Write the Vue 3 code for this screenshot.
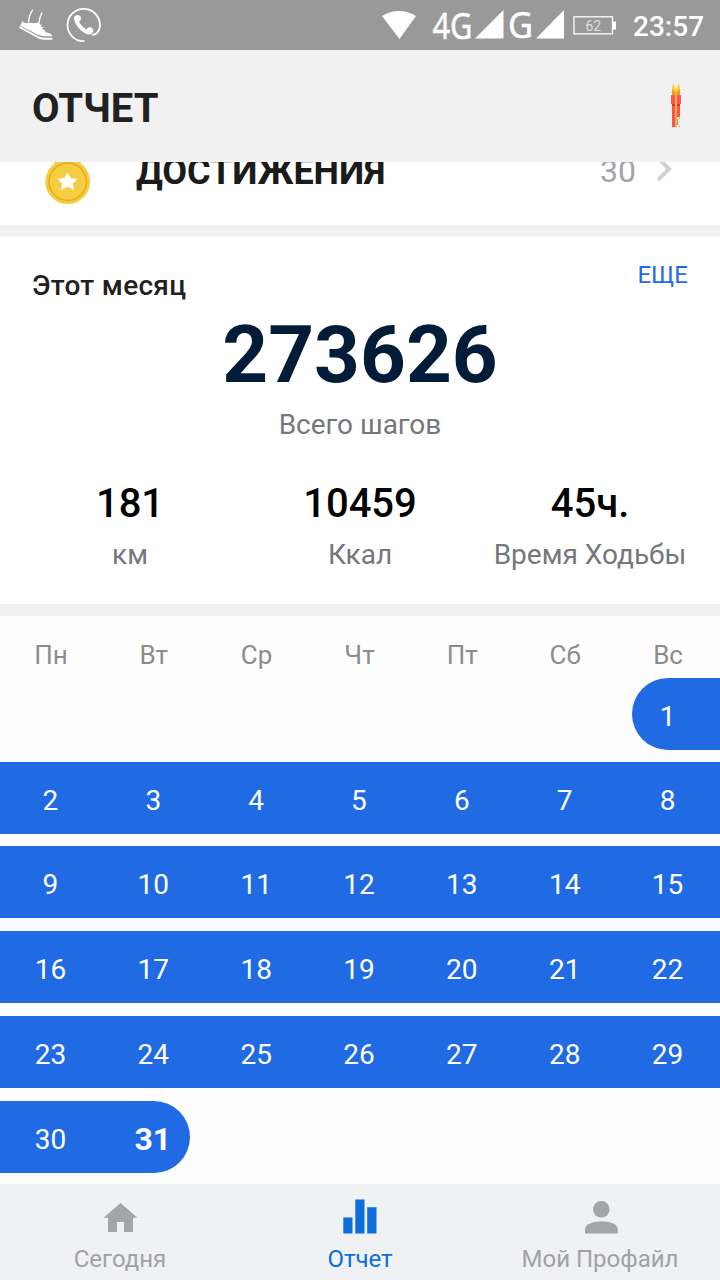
<template>
  <div class="screen">
    <div class="status">
      <svg class="sneaker" width="36" height="32" viewBox="0 0 36 32">
        <path d="M14.700 0.800 Q11 6 10.500 13 M24 3.500 Q21.500 8 21 14" fill="none" stroke="#fff" stroke-width="1.300" />
        <path d="M4.800 12.200 Q7.500 15.500 11 13.500 Q15 15 21 13.500 L23.500 18 Q25.500 22.500 30 24 Q34 25 34.400 27.300 H26 Q22 27 18 24.700 L2 16.800 Z" fill="#fff" />
        <path d="M1.300 18 L17 26.500 Q21.500 29.800 26 29.800 H34.300" fill="none" stroke="#fff" stroke-width="1.900" />
        <path d="M20.500 17.500 L23.800 15.800 M22 20 L25.200 18.300 M24 22.500 L26.800 20.800" stroke="#fff" stroke-width="1.100" />
      </svg>
      <svg class="call" width="36" height="36" viewBox="0 0 36 36">
        <path d="M18.500 34.200 A16.200 16.200 0 1 1 33.600 21 Q32 27.500 26 27.800" fill="none" stroke="#fff" stroke-width="1.800" />
        <path d="M8 12 Q7.500 8.500 11 8 Q14.500 7.500 15 11 Q15.200 13 13 14.500 Q15 19 20.500 22.500 Q22 19.500 25 20.500 Q28.500 22 26.800 25.300 Q24.500 29 20 26.800 Q10 21.500 8 12 Z" fill="#fff" />
      </svg>
      <svg class="wifi" width="34" height="28" viewBox="0 0 34 28">
        <path d="M0 5 Q17 -5 34 5 L17.500 28 Z" fill="#fff" />
      </svg>
      <svg class="network" width="132" height="50" viewBox="0 0 132 50">
        <g fill="#fff" stroke="#fff">
          <text x="0.500" y="38.500" stroke-width="0.500" textLength="40" lengthAdjust="spacingAndGlyphs">4G</text>
          <path d="M43 38.500 L71.500 10 V38.500 Z" stroke="none" />
          <text x="76" y="38" stroke-width="0.500" textLength="25" lengthAdjust="spacingAndGlyphs">G</text>
          <path d="M104 38.500 L132 10 V38.500 Z" stroke="none" />
        </g>
      </svg>
      <svg class="battery" width="43" height="19" viewBox="0 0 43 19">
        <rect x="1" y="0.800" width="38.500" height="17" fill="none" stroke="#fff" stroke-width="1.300" />
        <rect x="39.500" y="5.500" width="3.500" height="8" fill="#fff" />
        <text x="20.300" y="14.500" text-anchor="middle" fill="#dedede">62</text>
      </svg>
      <span class="clock">23:57</span>
    </div>

    <header class="header">
      <h1>ОТЧЕТ</h1>
      <svg width="12" height="46" viewBox="0 0 12 46">
        <path d="M1 13 V5 L2.500 0 L4 5 L5 7 L6 5 L7.500 0 L9 5 V13 Z" fill="#ffd02f" />
        <path d="M1 13 V6 L4 9 V13 M9 13 V6 L6 9 V13" fill="#f39a24" />
        <path d="M1 12 H9 V44 H1 Z" fill="#ff5254" />
        <path d="M0 12 H10 V21 H0 Z" fill="#ff5254" />
        <path d="M1 21 H9 V23 H1 Z" fill="#d92f3b" />
        <path d="M4 8 H6 V44 H4 Z" fill="#fbb629" />
        <path d="M6 34 H9 V44 H6 Z" fill="#e6e6e6" />
        <path d="M6 36 H7 V42 H6 Z M8 35 H9 V36 H8 Z M8 43 H9 V44 H8 Z" fill="#9c9c96" />
      </svg>
    </header>

    <section class="achievements">
      <div class="achievements-row">
        <svg class="medal" width="46" height="62" viewBox="0 0 46 62">
          <path d="M9 0 H36 V19 H9 Z" fill="#f5cb3c" />
          <circle cx="22.700" cy="37.700" r="22.400" fill="#f5cd41" />
          <circle cx="22.700" cy="37.700" r="18.700" fill="none" stroke="#e5a91c" stroke-width="1.500" />
          <path d="M22.500 29 L25.400 34.300 L32.200 35.300 L27.500 39.600 L28.800 45.600 L22.500 42.600 L16.200 45.600 L17.500 39.600 L12.800 35.300 L19.600 34.300 Z" fill="#fff" stroke="#fff" stroke-width="0.600" stroke-linejoin="round" />
        </svg>
        <h2>ДОСТИЖЕНИЯ</h2>
        <span class="count">30</span>
        <svg class="chevron" width="16" height="26" viewBox="0 0 16 26">
          <path d="M2 2 L13 13 L2 24" fill="none" stroke="#d0d1d3" stroke-width="4" />
        </svg>
      </div>
    </section>

    <section class="month">
      <div class="month-head">
        <h3>Этот месяц</h3>
        <a class="more">ЕЩЕ</a>
      </div>
      <div class="total">273626</div>
      <div class="total-label">Всего шагов</div>
      <div class="stats">
        <div v-for="stat in stats" :key="stat.label" class="stat">
          <div class="stat-value">{{ stat.value }}</div>
          <div class="stat-label">{{ stat.label }}</div>
        </div>
      </div>
    </section>

    <section class="calendar">
      <div class="week weekdays">
        <span v-for="name in weekdays" :key="name">{{ name }}</span>
      </div>
      <div v-for="(week, i) in weeks" :key="i" class="week days">
        <div
          v-for="(day, j) in week"
          :key="j"
          class="day"
          :class="{ active: day, first: day === 1, today: day === 31 }"
        >
          {{ day }}
        </div>
      </div>
    </section>

    <nav class="tabs">
      <a class="tab">
        <svg width="36" height="36" viewBox="0 0 36 36">
          <path d="M18.500 3 L35.500 17.700 H31 V32 H22 V22 H15 V32 H6 V17.700 H1.500 Z" fill="#a4a5a9" />
        </svg>
        <span>Сегодня</span>
      </a>
      <a class="tab current">
        <svg width="36" height="36" viewBox="0 0 36 36">
          <path d="M1.300 17.500 H10.500 V33.500 H1.300 Z M13.300 -0.500 H22.500 V33.500 H13.300 Z M25.200 7.300 H34.500 V33.500 H25.200 Z" fill="#0d6ddb" />
        </svg>
        <span>Отчет</span>
      </a>
      <a class="tab">
        <svg width="36" height="36" viewBox="0 0 36 36">
          <circle cx="19.300" cy="9.300" r="8.300" fill="#a4a5a9" />
          <path d="M3 33.500 V29 C3 24 12 21.300 19.300 21.300 S35.800 24 35.800 29 V33.500 Z" fill="#a4a5a9" />
        </svg>
        <span>Мой Профайл</span>
      </a>
    </nav>
  </div>
</template>

<script setup>
const stats = [
  { value: '181', label: 'км' },
  { value: '10459', label: 'Ккал' },
  { value: '45ч.', label: 'Время Ходьбы' }
]

const weekdays = ['Пн', 'Вт', 'Ср', 'Чт', 'Пт', 'Сб', 'Вс']

// the month starts on a Sunday
const offset = 6
const daysInMonth = 31

const weeks = []
for (let start = 1 - offset; start <= daysInMonth; start += 7) {
  weeks.push(
    Array.from({ length: 7 }, (_, i) => {
      const day = start + i
      return day >= 1 && day <= daysInMonth ? day : null
    })
  )
}
</script>

<style>
body {
  margin: 0;
  background: #f1f1f1;
}
</style>

<style scoped>
.screen {
  width: 720px;
  height: 1280px;
  display: flex;
  flex-direction: column;
  overflow: hidden;
  background: #f1f1f1;
  font-family: Roboto, 'Noto Sans', sans-serif;
}

h1,
h2,
h3 {
  margin: 0;
}

svg {
  display: block;
  flex-shrink: 0;
}

.status {
  display: flex;
  align-items: center;
  height: 50px;
  flex-shrink: 0;
  box-sizing: border-box;
  padding-left: 18px;
  background: #999;
  color: #fff;
}

.call {
  margin-left: 12px;
}

.wifi {
  margin-left: 280px;
}

.network {
  margin-left: 16px;
  font-family: 'Noto Sans', sans-serif;
  font-size: 36px;
}

.battery {
  margin-left: 9px;
  font-size: 14px;
}

.clock {
  margin-left: 17px;
  padding-top: 3px;
  font-size: 28px;
  font-weight: 500;
}

.header {
  display: flex;
  align-items: center;
  justify-content: space-between;
  height: 112px;
  flex-shrink: 0;
  box-sizing: border-box;
  padding: 0 37px 0 32px;
  background: #f1f1f1;
}

.header h1 {
  padding-top: 6px;
  color: #212121;
  font-size: 40px;
  line-height: 48px;
  font-weight: 700;
}

/* scrolled partly under the header */
.achievements {
  display: flex;
  align-items: flex-end;
  height: 63px;
  flex-shrink: 0;
  overflow: hidden;
  background: #fff;
}

.achievements-row {
  display: flex;
  align-items: center;
  width: 100%;
  height: 108px;
  box-sizing: border-box;
  padding: 0 48px 0 45px;
}

.medal {
  margin-top: 7px;
}

.achievements h2 {
  flex: 1;
  margin-left: 45px;
  padding-top: 2px;
  color: #1b1b1b;
  font-size: 36px;
  line-height: 44px;
  font-weight: 700;
  letter-spacing: -0.1px;
}

.count {
  color: #a3a4a8;
  font-size: 32px;
}

.chevron {
  margin: 0 0 4px 20px;
}

.month {
  height: 367px;
  flex-shrink: 0;
  margin: 12px 0;
  background: #fff;
  text-align: center;
}

.month-head {
  display: flex;
  justify-content: space-between;
  height: 72px;
  box-sizing: border-box;
  padding: 22px 32px 0;
}

.month-head h3 {
  padding-top: 10px;
  color: #212121;
  font-size: 28px;
  line-height: 34px;
  font-weight: 500;
  letter-spacing: 0.3px;
}

.more {
  color: #206be3;
  font-size: 24px;
  line-height: 32px;
}

.total {
  color: #001c38;
  font-size: 80px;
  line-height: 92px;
  font-weight: 700;
}

.total-label {
  padding-top: 7px;
  color: #74777c;
  font-size: 28px;
  line-height: 34px;
}

.stats {
  display: grid;
  grid-template-columns: repeat(3, 1fr);
  padding: 38px 15px 0;
}

.stat-value {
  color: #000;
  font-size: 40px;
  line-height: 48px;
  font-weight: 500;
}

.stat-label {
  padding-top: 10px;
  color: #74777c;
  font-size: 28px;
  line-height: 34px;
  white-space: nowrap;
}

.calendar {
  flex: 1;
  background: #fdfdfd;
}

.week {
  display: grid;
  grid-template-columns: repeat(7, 1fr);
  text-align: center;
}

.weekdays {
  height: 62px;
  box-sizing: border-box;
  padding-top: 23px;
  color: #8c8c8c;
  font-size: 26px;
  line-height: 32px;
}

.weekdays span {
  padding-right: 1px;
}

.days {
  height: 72px;
  margin-bottom: 13px;
}

.days:nth-child(2),
.days:nth-child(3) {
  margin-bottom: 12px;
}

.days:last-child {
  margin-bottom: 0;
}

.day {
  box-sizing: border-box;
  padding: 5px 2px 0 0;
  color: #fff;
  font-size: 28px;
  line-height: 67px;
}

.day.active {
  background: #206be3;
}

.day.first {
  margin-left: 15px;
  padding-right: 17px;
  border-radius: 36px 0 0 36px;
}

.day.today {
  margin-right: 16px;
  padding-right: 0;
  padding-left: 13px;
  border-radius: 0 36px 36px 0;
  font-size: 32px;
  font-weight: 700;
}

.tabs {
  display: grid;
  grid-template-columns: repeat(3, 1fr);
  height: 96px;
  flex-shrink: 0;
  background: #f0f1f3;
}

.tab {
  display: flex;
  flex-direction: column;
  align-items: center;
  padding-top: 16px;
  color: #a1a2a5;
  font-size: 24px;
  line-height: 30px;
}

.tab svg {
  overflow: visible;
}

.tab span {
  padding-top: 8px;
}

.tab.current {
  color: #0d6ddb;
}
</style>
